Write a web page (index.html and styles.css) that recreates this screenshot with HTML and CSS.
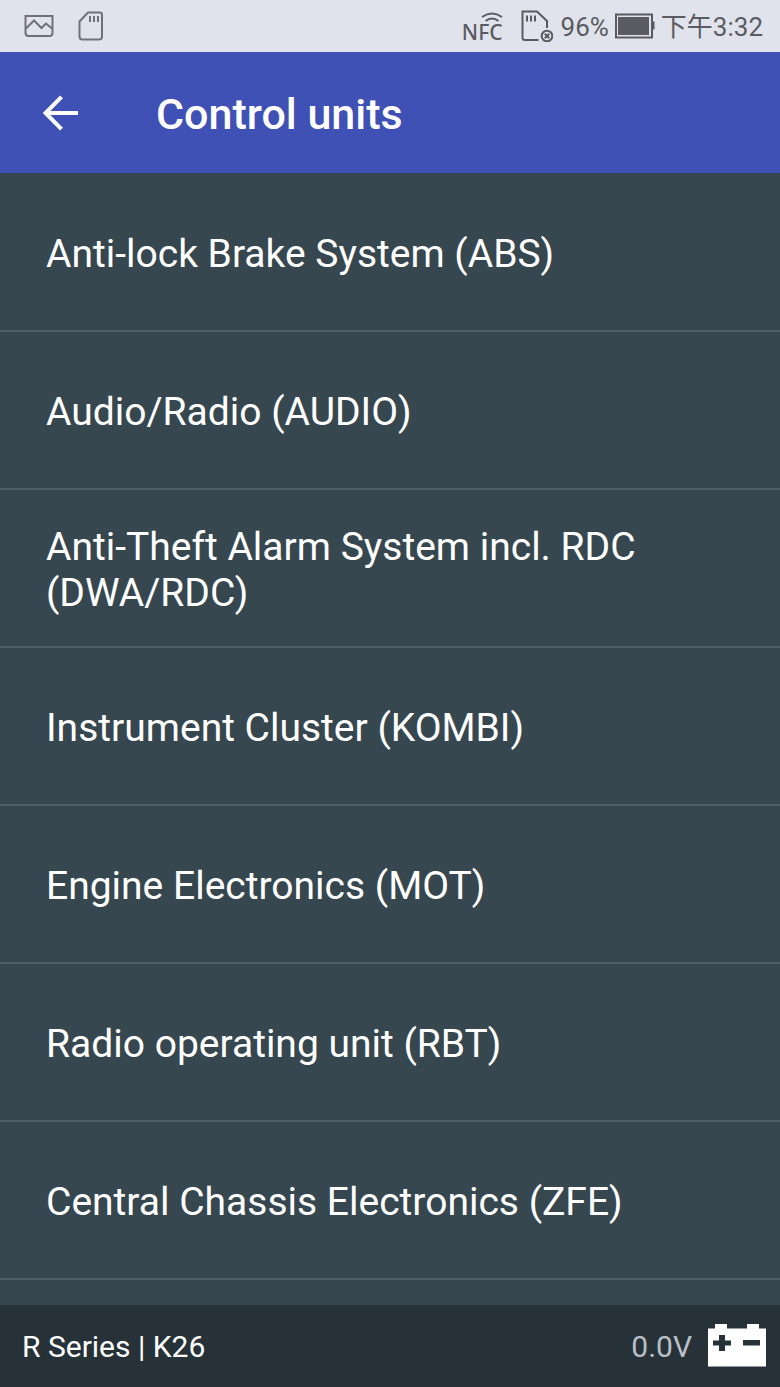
FILE: index.html
```html
<!DOCTYPE html>
<html lang="en">
<head>
<meta charset="utf-8">
<meta name="viewport" content="width=device-width, initial-scale=1">
<title>Control units</title>
<link rel="stylesheet" href="styles.css">
</head>
<body>
<div class="app">
  <div class="status">
    <svg class="status-picture" width="30" height="24" viewBox="0 0 30 24" aria-hidden="true">
      <path d="M1.500 2h27v17a3 3 0 0 1-3 3h-21a3 3 0 0 1-3-3zM1.500 15l8.500-8.500 7.500 7.500 4.500-4.500 6.500 5.500"/>
    </svg>
    <svg class="status-card" width="26" height="30" viewBox="0 0 26 30" aria-hidden="true">
      <path d="M10 1.500h12a2 2 0 0 1 2 2v22a3 3 0 0 1-3 3H4.500a3 3 0 0 1-3-3V10.500zM12 5v6M16 5v6M20 5v6"/>
    </svg>
    <span class="status-gap"></span>
    <div class="nfc">
      <svg class="nfc-waves" width="22" height="10" viewBox="0 0 22 10" aria-hidden="true">
        <path d="M1 5Q11-2 21 5M4.500 9Q11 4 17.500 9"/>
      </svg>
      <span class="nfc-label">NFC</span>
    </div>
    <svg class="status-eject" width="32" height="32" viewBox="0 0 32 32" aria-hidden="true">
      <path d="M17.500 30H4a2.500 2.500 0 0 1-2.500-2.500V1.500h14.500l10 9.500v7M6 5.500v6M10 5.500v6M14 5.500v6"/>
      <circle cx="26" cy="26" r="5.300"/>
      <path d="M23.800 23.800l4.400 4.400M28.200 23.800l-4.400 4.400"/>
    </svg>
    <span class="percent">96%</span>
    <svg class="battery" width="40" height="26" viewBox="0 0 40 26" aria-hidden="true">
      <path class="line" d="M1 1.500h36v23H1z"/>
      <path class="solid" d="M3 4h31v18H3zM37 8.500h2.500v8H37z"/>
    </svg>
    <time class="clock">下午3:32</time>
  </div>
  <header class="bar">
    <button class="back" type="button" aria-label="Back">
      <svg width="36" height="36" viewBox="0 0 36 36" aria-hidden="true">
        <path d="M35 18H3M18.500 1.800L2.500 18l16 16.200"/>
      </svg>
    </button>
    <h1 class="title">Control units</h1>
  </header>
  <main class="content">
    <ul class="units">
      <li class="unit">Anti-lock Brake System (ABS)</li>
      <li class="unit">Audio/Radio (AUDIO)</li>
      <li class="unit">Anti-Theft Alarm System incl. RDC (DWA/RDC)</li>
      <li class="unit">Instrument Cluster (KOMBI)</li>
      <li class="unit">Engine Electronics (MOT)</li>
      <li class="unit">Radio operating unit (RBT)</li>
      <li class="unit">Central Chassis Electronics (ZFE)</li>
    </ul>
  </main>
  <footer class="footer">
    <span>R Series | K26</span>
    <div class="voltage">
      <span>0.0V</span>
      <svg width="58" height="44" viewBox="0 0 58 44" aria-hidden="true">
        <path class="case" d="M0 4.500h7V0h12v4.500h20V0h12v4.500h7v38H0z"/>
        <path class="signs" d="M11 11h6v5.500h6v5h-6V27h-6v-5.500H5v-5h6zM35 16h17v5.500H35z"/>
      </svg>
    </div>
  </footer>
</div>
</body>
</html>
```

FILE: styles.css
```css
* {
  box-sizing: border-box;
}

body {
  margin: 0;
  background: #37474f;
  color: #fff;
  font-family: Roboto, "Noto Sans CJK SC", sans-serif;
}

.app {
  display: flex;
  flex-direction: column;
  height: 100vh;
}

.status {
  display: flex;
  flex: none;
  align-items: center;
  height: 52px;
  padding: 0 17px 0 24px;
  background: #e0e3ec;
  color: #5a5b61;
  font-size: 26px;
  line-height: 32px;
}

.status svg {
  flex: none;
  fill: none;
  stroke: #5a5b61;
  stroke-width: 2;
}

.status .status-picture,
.status .status-card {
  stroke: #707178;
}

.status-card {
  margin-left: 24px;
}

.status-gap {
  flex: 1;
}

.nfc,
.percent,
.clock {
  padding-top: 2px;
}

.nfc {
  display: flex;
  flex-direction: column;
  align-items: flex-end;
  margin-right: 18px;
}

.nfc-label {
  font-family: "Noto Sans", sans-serif;
  font-size: 21px;
  font-weight: 500;
  line-height: 20px;
}

.status-eject {
  margin-right: 8px;
}

.percent {
  margin-right: 6px;
}

.battery {
  margin-right: 6px;
}

.status .battery .solid {
  fill: #5a5b61;
  stroke: none;
}

.bar {
  display: flex;
  flex: none;
  align-items: center;
  height: 121px;
  padding: 0 43px;
  background: #3f51b5;
}

.back {
  display: flex;
  margin: 0 77px 0 0;
  padding: 0;
  border: 0;
  background: none;
}

.back path {
  fill: none;
  stroke: #fff;
  stroke-width: 4;
}

.title {
  margin: 0;
  padding-top: 2px;
  font-size: 43px;
  font-weight: 500;
  line-height: 52px;
}

.content {
  flex: 1;
  min-height: 0;
  overflow: hidden;
}

.units {
  margin: 0;
  padding: 1px 0 0;
  list-style: none;
}

.unit {
  display: flex;
  align-items: center;
  min-height: 158px;
  padding: 4px 46px 0;
  border-bottom: 2px solid #4f5f67;
  font-size: 39px;
  line-height: 46px;
}

.footer {
  display: flex;
  flex: none;
  align-items: center;
  justify-content: space-between;
  height: 82px;
  padding: 0 14px 0 22px;
  background: #263238;
  font-size: 30px;
}

.voltage {
  display: flex;
  align-items: center;
  gap: 16px;
  color: #b9bfc6;
}

.case {
  fill: #fff;
}

.signs {
  fill: #263238;
}
```
